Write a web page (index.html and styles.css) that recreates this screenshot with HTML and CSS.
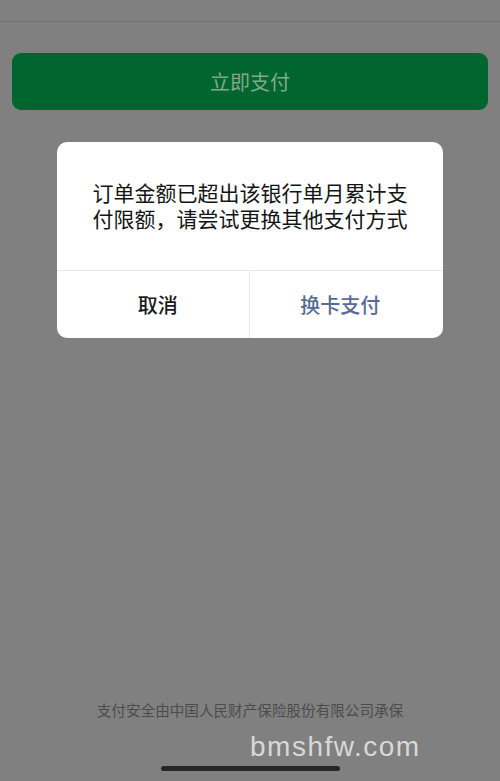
FILE: index.html
```html
<!DOCTYPE html>
<html lang="zh-CN">
<head>
<meta charset="utf-8">
<title>支付</title>
<link rel="stylesheet" href="styles.css">
</head>
<body>
<div class="page">
  <div class="topbar"></div>
  <div class="pay-btn">立即支付</div>
  <div class="spacer"></div>
  <div class="footer">支付安全由中国人民财产保险股份有限公司承保</div>
  <div class="watermark">bmshfw.com</div>
  <div class="home-bar"></div>
</div>
<div class="dialog">
  <div class="dialog-msg">订单金额已超出该银行单月累计支付限额，请尝试更换其他支付方式</div>
  <div class="dialog-actions">
    <div class="action cancel">取消</div>
    <div class="action confirm">换卡支付</div>
  </div>
</div>
</body>
</html>
```

FILE: styles.css
```css
html, body {
  margin: 0;
  padding: 0;
}
body {
  width: 500px;
  height: 781px;
  background: #808080;
  font-family: "Noto Sans CJK SC", "Noto Sans", sans-serif;
  overflow: hidden;
  position: relative;
}
.page {
  display: flex;
  flex-direction: column;
  height: 781px;
}
.topbar {
  height: 21px;
  border-bottom: 1px solid #727272;
  flex: none;
}
.pay-btn {
  margin: 31px 12px 0;
  height: 57px;
  border-radius: 9px;
  background: #01652f;
  color: #80a98a;
  font-size: 20px;
  display: flex;
  align-items: center;
  justify-content: center;
  flex: none;
}
.spacer {
  flex: 1;
}
.footer {
  text-align: center;
  font-size: 14.6px;
  line-height: 20px;
  color: #4c4c4c;
  flex: none;
}
.watermark {
  margin: 13px 0 0 250px;
  font-family: "Liberation Sans", Arial, sans-serif;
  font-size: 28px;
  line-height: 28px;
  letter-spacing: 1.5px;
  color: #d8d8d8;
  flex: none;
}
.home-bar {
  margin: 5px auto 10px;
  width: 179px;
  height: 5px;
  border-radius: 3px;
  background: #262626;
  flex: none;
}
.dialog {
  position: absolute;
  left: 57px;
  top: 142px;
  width: 386px;
  background: #ffffff;
  border-radius: 10px;
  overflow: hidden;
}
.dialog-msg {
  height: 129px;
  box-sizing: border-box;
  padding: 0 35px 2px;
  display: flex;
  align-items: center;
  justify-content: center;
  text-align: center;
  font-size: 21px;
  line-height: 26px;
  color: #141414;
  border-bottom: 1px solid #e8e8e8;
}
.dialog-actions {
  display: flex;
  height: 67px;
}
.action {
  flex: 1;
  display: flex;
  align-items: center;
  justify-content: center;
  font-size: 20px;
  font-weight: 500;
}
.cancel {
  color: #1a1a1a;
  border-right: 1px solid #e8e8e8;
  padding-left: 10px;
}
.confirm {
  color: #576b95;
  padding-right: 12px;
}
```
